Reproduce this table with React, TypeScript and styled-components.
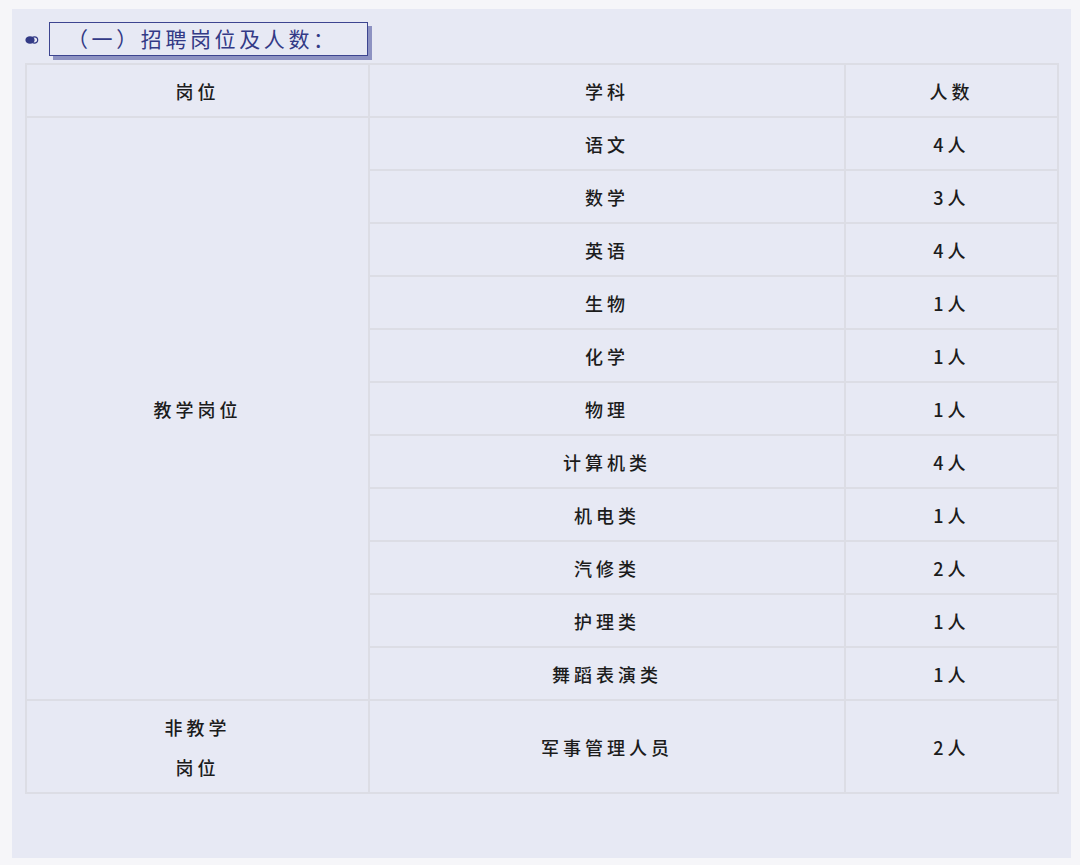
import React from 'react';
import styled, { createGlobalStyle } from 'styled-components';

const GlobalStyle = createGlobalStyle`
  body {
    margin: 0;
    background: #f6f6f9;
    font-family: 'Noto Sans CJK SC', 'Noto Sans', sans-serif;
  }
`;

interface Row {
  subject: string;
  count: string;
}

const teachRows: Row[] = [
  { subject: '语文', count: '4人' },
  { subject: '数学', count: '3人' },
  { subject: '英语', count: '4人' },
  { subject: '生物', count: '1人' },
  { subject: '化学', count: '1人' },
  { subject: '物理', count: '1人' },
  { subject: '计算机类', count: '4人' },
  { subject: '机电类', count: '1人' },
  { subject: '汽修类', count: '2人' },
  { subject: '护理类', count: '1人' },
  { subject: '舞蹈表演类', count: '1人' }
];

function App() {
  return (
    <>
      <GlobalStyle />
      <Panel>
        <TitleRow>
          <Bullet viewBox="0 0 14 8" width={14} height={8}>
            <circle cx="9.5" cy="4" r="3.2" fill="none" stroke="#333a86" strokeWidth="1.2" />
            <ellipse cx="5" cy="4" rx="4.6" ry="3.8" fill="#333a86" />
          </Bullet>
          <TitleBox>（一）招聘岗位及人数：</TitleBox>
        </TitleRow>
        <Table>
          <colgroup>
            <col style={{ width: 343 }} />
            <col style={{ width: 476 }} />
            <col style={{ width: 213 }} />
          </colgroup>
          <tbody>
            <tr>
              <Cell>岗位</Cell>
              <Cell>学科</Cell>
              <Cell>人数</Cell>
            </tr>
            {teachRows.map((row, i) => (
              <tr key={row.subject}>
                {i === 0 && <Cell rowSpan={teachRows.length}>教学岗位</Cell>}
                <Cell>{row.subject}</Cell>
                <Cell>{row.count}</Cell>
              </tr>
            ))}
            <tr>
              <TallCell>
                非教学
                <br />
                岗位
              </TallCell>
              <TallCell>军事管理人员</TallCell>
              <TallCell>2人</TallCell>
            </tr>
          </tbody>
        </Table>
      </Panel>
    </>
  );
}

const Panel = styled.div`
  margin: 9px 0 0 12px;
  width: 1059px;
  height: 849px;
  box-sizing: border-box;
  background: #e7e9f4;
  padding: 13px 14px 0 13px;
`;

const TitleRow = styled.div`
  display: flex;
  align-items: center;
  height: 34px;
  margin-bottom: 7px;
`;

const Bullet = styled.svg`
  margin: 1px 10px 0 0;
  flex-shrink: 0;
`;

const TitleBox = styled.div`
  box-sizing: border-box;
  height: 34px;
  width: 319px;
  border: 1.5px solid #3d4590;
  box-shadow: 4px 4px 0 #8d92c2;
  color: #333a86;
  font-size: 21px;
  font-weight: 400;
  letter-spacing: 3.6px;
  line-height: 31px;
  padding-left: 17px;
  white-space: nowrap;
`;

const Table = styled.table`
  width: 1032px;
  border-collapse: collapse;
  table-layout: fixed;
`;

const Cell = styled.td`
  border: 2px solid #dcdde5;
  height: 51px;
  padding: 0;
  text-align: center;
  vertical-align: middle;
  font-size: 18px;
  font-weight: 500;
  letter-spacing: 4px;
  color: #1c1c1c;
  line-height: 26px;
`;

const TallCell = styled(Cell)`
  height: 91px;
  line-height: 40px;
`;

export default App;
